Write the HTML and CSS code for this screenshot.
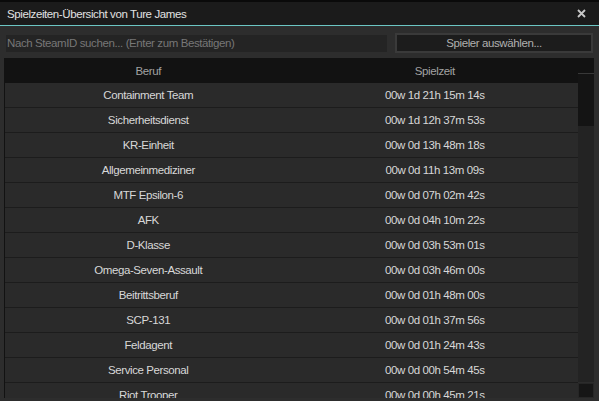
FILE: index.html
```html
<!DOCTYPE html>
<html lang="de">
  <head>
    <meta charset="UTF-8" />
    <meta name="viewport" content="width=device-width, initial-scale=1.0" />
    <title>Spielzeiten-Übersicht</title>
    <link rel="stylesheet" href="styles.css">
  </head>
  <body>
    <div class="window">
      <div class="titlebar">
        <span class="title">Spielzeiten-Übersicht von Ture James</span>
        <svg class="close" width="9" height="9" viewBox="0 0 9 9">
          <path d="M1 1 L8 8 M8 1 L1 8" stroke="#c8c8c8" stroke-width="1.8" />
        </svg>
      </div>

      <div class="toolbar">
        <input class="search" type="text" placeholder="Nach SteamID suchen... (Enter zum Bestätigen)" />
        <button class="btn-select">Spieler auswählen...</button>
      </div>

      <div class="table">
        <div class="list">
          <div class="row head">
            <div class="cell">Beruf</div>
            <div class="cell">Spielzeit</div>
          </div>
          <div class="row"><div class="cell">Containment Team</div><div class="cell">00w 1d 21h 15m 14s</div></div>
          <div class="row"><div class="cell">Sicherheitsdienst</div><div class="cell">00w 1d 12h 37m 53s</div></div>
          <div class="row"><div class="cell">KR-Einheit</div><div class="cell">00w 0d 13h 48m 18s</div></div>
          <div class="row"><div class="cell">Allgemeinmediziner</div><div class="cell">00w 0d 11h 13m 09s</div></div>
          <div class="row"><div class="cell">MTF Epsilon-6</div><div class="cell">00w 0d 07h 02m 42s</div></div>
          <div class="row"><div class="cell">AFK</div><div class="cell">00w 0d 04h 10m 22s</div></div>
          <div class="row"><div class="cell">D-Klasse</div><div class="cell">00w 0d 03h 53m 01s</div></div>
          <div class="row"><div class="cell">Omega-Seven-Assault</div><div class="cell">00w 0d 03h 46m 00s</div></div>
          <div class="row"><div class="cell">Beitrittsberuf</div><div class="cell">00w 0d 01h 48m 00s</div></div>
          <div class="row"><div class="cell">SCP-131</div><div class="cell">00w 0d 01h 37m 56s</div></div>
          <div class="row"><div class="cell">Feldagent</div><div class="cell">00w 0d 01h 24m 43s</div></div>
          <div class="row"><div class="cell">Service Personal</div><div class="cell">00w 0d 00h 54m 45s</div></div>
          <div class="row"><div class="cell">Riot Trooper</div><div class="cell">00w 0d 00h 45m 21s</div></div>
        </div>
        <div class="scrollbar">
          <div class="track-top"></div>
          <div class="thumb"></div>
          <div class="btn-down"></div>
        </div>
      </div>
    </div>
  </body>
</html>
```

FILE: styles.css
```css
body {
  margin: 0;
  background-color: #0a0a0a;
  font-family: "Liberation Sans", Arial, sans-serif;
  font-size: 11.5px;
  letter-spacing: -0.4px;
}
.window {
  margin-top: 2px;
  height: 399px;
  background-color: #2d2d2d;
  overflow: hidden;
}
.titlebar {
  height: 23px;
  background-color: #1b1b1b;
  border-bottom: 1px solid #6cc6c4;
  display: flex;
  align-items: center;
  padding: 0 13px 0 7px;
}
.title {
  flex: 1;
  color: #e2e2e2;
}
.close {
  display: block;
}
.toolbar {
  display: flex;
  align-items: center;
  gap: 8px;
  padding: 7px 6px 0 6px;
  height: 20px;
}
.search {
  flex: 1;
  height: 17px;
  padding: 0 1px;
  border: none;
  background-color: #242424;
  color: #cfcfcf;
  font: inherit;
  letter-spacing: inherit;
  outline: none;
}
.search::placeholder {
  color: #777;
}
.btn-select {
  width: 198px;
  height: 20px;
  padding: 0;
  border: 2px solid #3a3a3a;
  background-color: #1c1c1c;
  color: #b0b0b0;
  font: inherit;
  letter-spacing: inherit;
}
.table {
  display: flex;
  margin: 5px 5px 0 4px;
  height: 340px;
  background-color: #121212;
  overflow: hidden;
}
.list {
  flex: 1;
  padding-left: 1px;
  overflow: hidden;
}
.row {
  display: flex;
  height: 24px;
  border-bottom: 1px solid #1c1c1c;
  background-color: #2a2a2a;
  color: #d8d8d8;
}
.row.head {
  height: 25px;
  border-bottom: none;
  background-color: #121212;
  color: #a2a2a2;
}
.cell {
  flex: 1;
  display: flex;
  align-items: center;
  justify-content: center;
  white-space: nowrap;
}
.scrollbar {
  width: 16px;
  margin-top: 15px;
  display: flex;
  flex-direction: column;
  border-top: 1px solid #383838;
}
.track-top {
  height: 52px;
  background-color: #141414;
}
.thumb {
  height: 256px;
  background-color: #232323;
  border-bottom: 1px solid #2c2c2c;
}
.btn-down {
  flex: 1;
  background-color: #161616;
  border: 1px solid #262626;
}
```
